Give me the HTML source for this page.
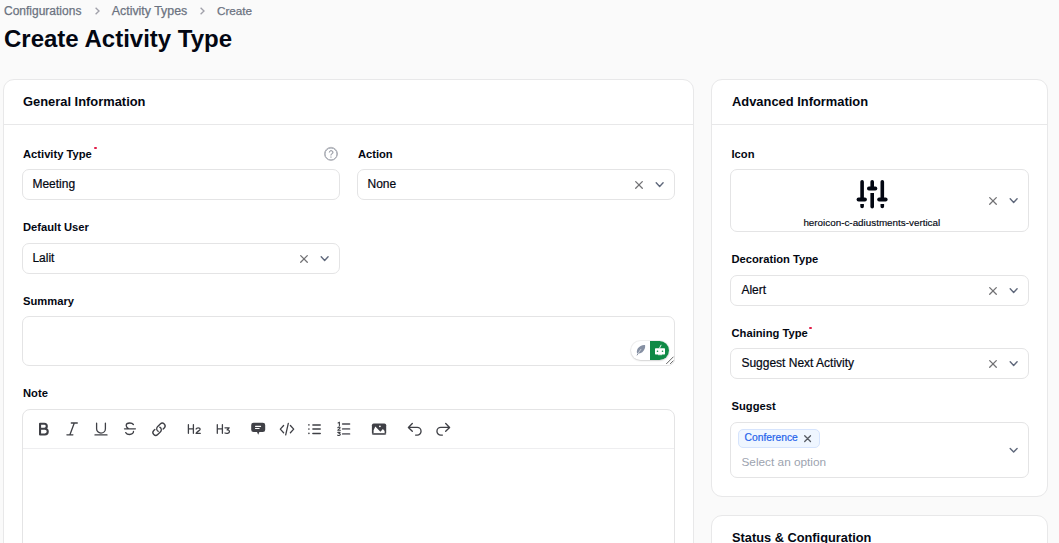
<!DOCTYPE html>
<html><head><meta charset="utf-8">
<style>
*{box-sizing:border-box;margin:0;padding:0}
html,body{width:1059px;height:543px;overflow:hidden;background:#fafafa;font-family:"Liberation Sans",sans-serif;color:#030712}
.a{position:absolute}
.t{position:absolute;white-space:nowrap;line-height:1}
.bc{font-size:12px;color:#6b7280;-webkit-text-stroke:0.25px #6b7280}
.card{position:absolute;background:#fff;border:1px solid #e8e8e9;border-radius:11px}
.hdiv{position:absolute;height:1px;background:#e8e8e9}
.h2{font-size:12.9px;font-weight:bold;color:#030712}
.lbl{font-size:11.2px;font-weight:bold;color:#030712}
.req{color:#dc2626;font-size:10px;font-weight:bold}
.inp{position:absolute;background:#fff;border:1px solid #e4e4e5;border-radius:7px}
.val{font-size:12px;color:#030712;-webkit-text-stroke:0.2px #030712}
svg{position:absolute;overflow:visible}
</style></head><body>

<!-- breadcrumbs -->
<div class="t bc" style="left:4px;top:4.8px">Configurations</div>
<svg style="left:92.3px;top:6px" width="10" height="10" viewBox="0 0 10 10"><path d="M3.6 1.7 L7 5 L3.6 8.3" fill="none" stroke="#a1a1aa" stroke-width="1.35"/></svg>
<div class="t bc" style="left:111.8px;top:4.6px;font-size:12.39px">Activity Types</div>
<svg style="left:197.4px;top:6px" width="10" height="10" viewBox="0 0 10 10"><path d="M3.6 1.7 L7 5 L3.6 8.3" fill="none" stroke="#a1a1aa" stroke-width="1.35"/></svg>
<div class="t bc" style="left:216.9px;top:4.9px;font-size:11.75px">Create</div>

<div class="t" style="left:4px;top:27.2px;font-size:24px;font-weight:bold;color:#030712">Create Activity Type</div>

<!-- LEFT CARD -->
<div class="card" style="left:3px;top:79px;width:691px;height:560px"></div>
<div class="hdiv" style="left:4px;top:124px;width:689px"></div>
<div class="t h2" style="left:23px;top:95.6px">General Information</div>

<div class="t lbl" style="left:23px;top:148.5px">Activity Type</div>
<div class="a" style="left:94px;top:146.6px;width:2.6px;height:2.6px;border-radius:50%;background:#e11d48"></div>
<svg style="left:324px;top:147px" width="14" height="14" viewBox="0 0 14 14"><circle cx="7" cy="7" r="6" fill="none" stroke="#9ca3af" stroke-width="1"/><path d="M5.3 5.6a1.8 1.8 0 1 1 2.4 1.6c-.5.2-.7.5-.7 1v.3" fill="none" stroke="#9ca3af" stroke-width="1"/><circle cx="7" cy="10.2" r=".6" fill="#9ca3af"/></svg>
<div class="inp" style="left:22px;top:169px;width:318px;height:31px"></div>
<div class="t val" style="left:32.4px;top:177.5px">Meeting</div>

<div class="t lbl" style="left:357.9px;top:148.5px">Action</div>
<div class="inp" style="left:357px;top:169px;width:318px;height:31px"></div>
<div class="t val" style="left:367.5px;top:177.5px">None</div>

<div class="t lbl" style="left:23px;top:222.2px">Default User</div>
<div class="inp" style="left:22px;top:243px;width:318px;height:31px"></div>
<div class="t val" style="left:32.4px;top:251.5px">Lalit</div>

<div class="t lbl" style="left:23px;top:296.3px">Summary</div>
<div class="inp" style="left:22px;top:316px;width:653px;height:50px"></div>

<div class="t lbl" style="left:23px;top:388.1px">Note</div>
<div class="inp" style="left:22px;top:409px;width:653px;height:200px;border-radius:8px"></div>
<div class="hdiv" style="left:23px;top:448px;width:651px;background:#eeeef0"></div>


<!-- AI pill -->
<div class="a" style="left:630.5px;top:340.5px;width:38.7px;height:19.7px;border-radius:10px;background:#fff;box-shadow:0 0 0 1px rgba(0,0,0,.06),0 1px 2px rgba(0,0,0,.12);overflow:hidden">
  <div class="a" style="left:19.3px;top:0;width:20px;height:100%;background:#0f8a46"></div>
</div>
<!-- RIGHT CARD -->
<div class="card" style="left:711px;top:79px;width:337px;height:418px"></div>
<div class="hdiv" style="left:712px;top:124px;width:335px"></div>
<div class="t h2" style="left:732px;top:95.6px">Advanced Information</div>

<div class="t lbl" style="left:731.5px;top:148.5px">Icon</div>
<div class="inp" style="left:730px;top:169px;width:299px;height:63px"></div>
<div class="t" style="left:803.4px;top:218px;font-size:9.86px;color:#030712;-webkit-text-stroke:0.15px #030712">heroicon-c-adiustments-vertical</div>

<div class="t lbl" style="left:731.5px;top:254.2px">Decoration Type</div>
<div class="inp" style="left:730px;top:275px;width:299px;height:31px"></div>
<div class="t val" style="left:741.4px;top:283.5px">Alert</div>

<div class="t lbl" style="left:731.5px;top:327.8px">Chaining Type</div>
<div class="a" style="left:809px;top:326.6px;width:2.6px;height:2.6px;border-radius:50%;background:#e11d48"></div>
<div class="inp" style="left:730px;top:348px;width:299px;height:31px"></div>
<div class="t val" style="left:741.4px;top:356.5px">Suggest Next Activity</div>

<div class="t lbl" style="left:731.5px;top:400.8px">Suggest</div>
<div class="inp" style="left:730px;top:422px;width:299px;height:56px"></div>
<!-- badge -->
<div class="a" style="left:738.1px;top:429.1px;width:81.5px;height:18.7px;border-radius:5px;background:#eff6ff;border:1px solid #d6e4fd"></div>
<div class="t" style="left:744.6px;top:433.2px;font-size:10.3px;color:#2563eb;-webkit-text-stroke:0.2px #2563eb">Conference</div>
<div class="t" style="left:741.5px;top:457px;font-size:11.8px;color:#9ca3af">Select an option</div>


<div class="card" style="left:711px;top:515px;width:337px;height:100px"></div>
<div class="t h2" style="left:732px;top:532px;font-size:12.8px">Status &amp; Configuration</div>


<svg style="left:0;top:0" width="1059" height="543" viewBox="0 0 1059 543" fill="none" stroke-linecap="round" stroke-linejoin="round">

<!-- select icons -->
<g transform="translate(300.7 255.6)"><path d="M0 0L6.6 6.6M6.6 0L0 6.6" stroke="#727275" stroke-width="1.3"/></g><g transform="translate(321.2 256.8)"><path d="M0 0L3.45 3.6L6.9 0" stroke="#5f687b" stroke-width="1.4"/></g>
<g transform="translate(635.7 181.6)"><path d="M0 0L6.6 6.6M6.6 0L0 6.6" stroke="#727275" stroke-width="1.3"/></g><g transform="translate(656.2 182.8)"><path d="M0 0L3.45 3.6L6.9 0" stroke="#5f687b" stroke-width="1.4"/></g>
<g transform="translate(989.7 197.6)"><path d="M0 0L6.6 6.6M6.6 0L0 6.6" stroke="#727275" stroke-width="1.3"/></g><g transform="translate(1010.2 198.8)"><path d="M0 0L3.45 3.6L6.9 0" stroke="#5f687b" stroke-width="1.4"/></g>
<g transform="translate(989.7 287.6)"><path d="M0 0L6.6 6.6M6.6 0L0 6.6" stroke="#727275" stroke-width="1.3"/></g><g transform="translate(1010.2 288.8)"><path d="M0 0L3.45 3.6L6.9 0" stroke="#5f687b" stroke-width="1.4"/></g>
<g transform="translate(989.7 360.6)"><path d="M0 0L6.6 6.6M6.6 0L0 6.6" stroke="#727275" stroke-width="1.3"/></g><g transform="translate(1010.2 361.8)"><path d="M0 0L3.45 3.6L6.9 0" stroke="#5f687b" stroke-width="1.4"/></g>
<g transform="translate(1010.2 448.4)"><path d="M0 0L3.45 3.6L6.9 0" stroke="#5f687b" stroke-width="1.4"/></g>
<!-- badge x -->
<path d="M804.7 435.7L810.5 441.5M810.5 435.7L804.7 441.5" stroke="#555a62" stroke-width="1.3"/>
<!-- toolbar -->
<g stroke="#3f4046">
<path d="M40.05 423.75V434.45H44.9a2.85 2.85 0 0 0 0-5.7H40.05m0 0H44.3a2.5 2.5 0 0 0 0-5H40.05" stroke-width="2.1"/>
<path d="M71.3 423h6M66.9 434.8h6M74.3 423L69.9 434.8" stroke-width="1.3"/>
<path d="M96.6 423.2v5.5a4.4 4.4 0 0 0 8.8 0v-5.5M95 434.9h12" stroke-width="1.3"/>
<path d="M124.5 428.8H135.4M133.4 424.5C132.6 423.4 131.2 423 129.8 423C127.5 423 126.2 424.3 126.2 425.6C126.2 426.8 127 427.8 128.4 428.6M133.5 431.3C133.7 433.1 132 434.5 129.5 434.5C127.8 434.5 126.4 433.7 125.7 432.6" stroke-width="1.3"/>
<g transform="translate(151.56 421.81) scale(0.62)"><path d="M13.19 8.688a4.5 4.5 0 0 1 1.242 7.244l-4.5 4.5a4.5 4.5 0 0 1-6.364-6.364l1.757-1.757m13.35-.622 1.757-1.757a4.5 4.5 0 0 0-6.364-6.364l-4.5 4.5a4.5 4.5 0 0 0 1.242 7.244" stroke-width="2.15"/></g>
<path d="M188.4 424.7V433.3M193.4 424.7V433.3M188.4 428.8H193.4M196.1 429C196.6 427.7 199.9 427.5 200.2 429.1C200.4 430.3 196.7 431.7 196.1 433.3H200.3" stroke-width="1.3"/>
<path d="M217.3 424.7V433.3M222.4 424.7V433.3M217.3 428.8H222.4M225 427.8H229.2L227.1 429.9C228.8 429.8 229.5 430.6 229.4 431.8C229.2 433.4 226.3 433.7 225 433" stroke-width="1.3"/>
<path d="M283.6 425.5L280.3 429.1L283.6 432.7M290.4 425.5L293.7 429.1L290.4 432.7M288.3 423.4L285.7 434.9" stroke-width="1.3"/>
<path d="M312.9 424.9H320.2M312.9 429.1H320.2M312.9 433.4H320.2" stroke-width="1.5"/>
<path d="M342.8 424h6.6M342.8 428.9h6.6M342.8 433.9h6.6" stroke="#76767c" stroke-width="1.9"/>
<path d="M408.4 427.4L412.3 423.5M408.4 427.4L412.3 431.3M408.4 427.4H417.2a3.85 3.85 0 0 1 0 7.7H415.6" stroke-width="1.35"/>
<path d="M449.6 427.4L445.7 423.5M449.6 427.4L445.7 431.3M449.6 427.4H440.8a3.85 3.85 0 0 0 0 7.7H442.4" stroke-width="1.35"/>
</g>
<g fill="#3f4046">
<circle cx="308.9" cy="424.9" r=".8"/><circle cx="308.9" cy="429.1" r=".8"/><circle cx="308.9" cy="433.4" r=".8"/>
<path d="M253.6 422.7h9.2a2.4 2.4 0 0 1 2.4 2.4v4.6a2.4 2.4 0 0 1-2.4 2.4h-3.4l-1.2 2.6-1.2-2.6h-3.4a2.4 2.4 0 0 1-2.4-2.4v-4.6a2.4 2.4 0 0 1 2.4-2.4z"/>
<rect x="371.9" y="423.4" width="14.3" height="11.3" rx="1.8"/>
</g>
<path d="M255.5 426.3H260.6M255.5 428.5H259.1" stroke="#fff" stroke-width="1.15"/>
<path d="M373.6 433.1V430.2L375.3 426.6L380.4 431.7L382.9 428.9L384.6 431V433.1Z" fill="#fff"/>
<circle cx="379.9" cy="426.3" r=".9" fill="#fff"/>
<path d="M372.5 433.9h13.1" stroke="#6d6d72" stroke-width="1.2"/>
<path d="M338.1 422.9L339.4 422.2V425.6M337.8 427.7C338.2 426.9 340 426.9 340.1 427.8C340.2 428.6 338.3 429.3 337.8 430.2H340.4M337.8 432.4H340.1L338.9 433.6C339.9 433.6 340.4 434.1 340.3 434.7C340.1 435.6 338.5 435.7 337.7 435.2" stroke="#3f4046" stroke-width="1.1"/>

<!-- feather -->
<path d="M637.2 353.6C636.2 350.8 637.6 347.6 640.6 346C642.2 345.1 644.4 344.8 645.1 345.2C645.5 347.2 644.6 350.2 642.3 352.2C641 353.2 639.1 353.7 637.2 353.6Z" fill="#8690a3"/>
<path d="M637.2 355L638.2 353.4" stroke="#8690a3" stroke-width="1"/>
<path d="M637.8 353.7L640.9 349.3" stroke="#fff" stroke-width=".55"/>
<!-- robot -->
<rect x="655" y="348.2" width="10" height="6.2" rx=".6" fill="#fff"/>
<path d="M659.6 348L661 345.2" stroke="#fff" stroke-width=".9"/>
<circle cx="657.5" cy="351.3" r=".8" fill="#0f8a46"/><circle cx="662.5" cy="351.3" r=".8" fill="#0f8a46"/>
<rect x="658" y="354.2" width="4" height="1" fill="#fff" opacity=".8"/>
<!-- resize handle -->
<path d="M666.5 363.7L673.2 357M670.4 363.7L673.2 360.9" stroke="#555" stroke-width=".9"/>
<!-- help icon -->
<circle cx="331" cy="153.8" r="6.5" stroke="#b2b2b7" stroke-width=".95"/>
<path d="M329.4 151.6c.4-.7 1.1-1 1.8-1 1 0 1.7.6 1.7 1.4 0 1.2-1.6 1.4-1.9 2.8" stroke="#a8a8ae" stroke-width=".95"/>
<circle cx="330.9" cy="156.7" r=".45" fill="#b2b2b7"/>
<!-- adjustments icon -->
<g fill="#030712">
<path d="M860.3 199V181.8a1.8 1.8 0 0 1 3.6 0V199ZM860.3 203.9H863.9V206.4a1.8 1.8 0 0 1-3.6 0Z"/>
<rect x="856.6" y="197.6" width="10.3" height="3.9" rx="1.95"/>
<path d="M870.4 188V181.8a1.8 1.8 0 0 1 3.6 0V188ZM870.4 192.9H874V206.7a1.8 1.8 0 0 1-3.6 0Z"/>
<rect x="867" y="186.6" width="10.3" height="3.8" rx="1.9"/>
<path d="M880.5 199V181.8a1.8 1.8 0 0 1 3.6 0V199ZM880.5 203.9H884.1V206.4a1.8 1.8 0 0 1-3.6 0Z"/>
<rect x="877.2" y="197.6" width="10.4" height="3.9" rx="1.95"/>
</g>
</svg>
</body></html>
